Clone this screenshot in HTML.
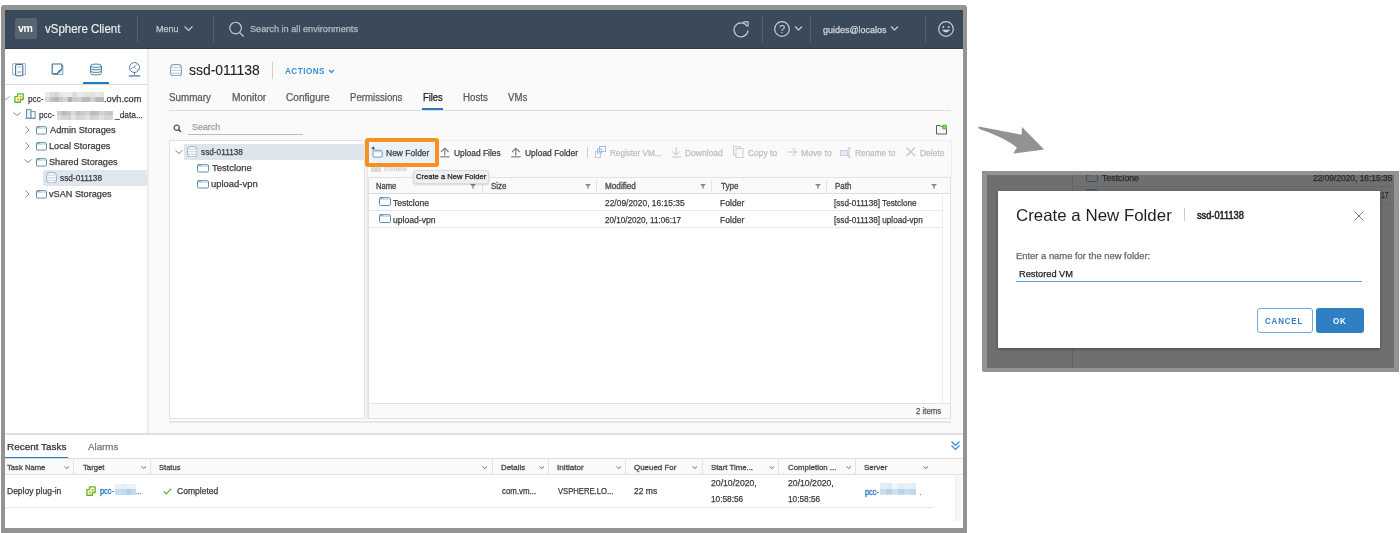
<!DOCTYPE html>
<html><head><meta charset="utf-8"><style>
html,body{margin:0;padding:0;width:1400px;height:533px;overflow:hidden;background:#fff;}
body>div,body>svg{position:absolute;}
.t{white-space:nowrap;-webkit-text-stroke:0.25px currentColor;font-family:"Liberation Sans",sans-serif;transform-origin:0 0;}
</style></head><body>
<div style="left:1px;top:5px;width:966px;height:528px;background:#939393;border-radius:3px 3px 0 0;"></div>
<div style="left:5px;top:10px;width:958px;height:518px;background:#fff;"></div>
<div style="left:5px;top:10px;width:958px;height:39px;background:#3b4a5a;"></div>
<div style="left:5px;top:48px;width:958px;height:1px;background:#2f3c49;"></div>
<div style="left:15px;top:18px;width:22px;height:21px;background:#57646f;border-radius:2px;"></div>
<div class="t" style="left:18.20px;top:23px;font-size:11px;line-height:11px;color:#fff;font-weight:bold;-webkit-text-stroke:0;transform:scaleX(0.9626);letter-spacing:-0.5px;">vm</div>
<div class="t" style="left:45.30px;top:23px;font-size:12px;line-height:12px;color:#eef0f2;transform:scaleX(0.9578);-webkit-text-stroke:0.15px #eef0f2;">vSphere Client</div>
<div style="left:137px;top:15px;width:1px;height:27px;background:#56636f;"></div>
<div style="left:154px;top:20.5px;width:41.5px;height:17px;border:1px solid #37465a;box-sizing:border-box;"></div>
<div class="t" style="left:155.90px;top:25px;font-size:9px;line-height:9px;color:#c2c9d0;transform:scaleX(1.0034);">Menu</div>
<svg style="left:183px;top:25px;" width="11" height="8" viewBox="0 0 11 8"><path d="M1.5 1.5 L5.5 5.5 L9.5 1.5" stroke="#c2c9d0" stroke-width="1.2" fill="none"/></svg>
<div style="left:213px;top:15px;width:1px;height:27px;background:#56636f;"></div>
<svg style="left:228px;top:21px;" width="18" height="17" viewBox="0 0 18 17"><circle cx="7.6" cy="7.1" r="5.8" stroke="#c9cfd5" stroke-width="1.1" fill="none"/><path d="M11.8 11.6 L15.8 15.6" stroke="#c9cfd5" stroke-width="1.3"/></svg>
<div class="t" style="left:250.00px;top:25px;font-size:9px;line-height:9px;color:#b4bcc4;transform:scaleX(1.0182);">Search in all environments</div>
<svg style="left:733px;top:20px;" width="18" height="18" viewBox="0 0 18 18"><path d="M14.2 6.5 A7 7 0 1 0 15.0 10.5" stroke="#c9cfd5" stroke-width="1.2" fill="none"/><path d="M10.2 1.8 L15.0 1.8 L15.0 6.6" stroke="#c9cfd5" stroke-width="1.2" fill="none"/></svg>
<div style="left:762px;top:15px;width:1px;height:27px;background:#56636f;"></div>
<svg style="left:773px;top:20px;" width="18" height="18" viewBox="0 0 18 18"><circle cx="9" cy="9" r="7.3" stroke="#c9cfd5" stroke-width="1.2" fill="none"/><text x="9" y="12.8" font-family="Liberation Sans" font-size="11" fill="#c9cfd5" text-anchor="middle">?</text></svg>
<svg style="left:794px;top:25px;" width="9" height="7" viewBox="0 0 9 7"><path d="M1 1.5 L4.5 5 L8 1.5" stroke="#c9cfd5" stroke-width="1.2" fill="none"/></svg>
<div style="left:810px;top:15px;width:1px;height:27px;background:#56636f;"></div>
<div class="t" style="left:822.90px;top:26px;font-size:9px;line-height:9px;color:#d3d8dd;transform:scaleX(0.9957);">guides@localos</div>
<svg style="left:890px;top:25px;" width="9" height="7" viewBox="0 0 9 7"><path d="M1 1.5 L4.5 5 L8 1.5" stroke="#c9cfd5" stroke-width="1.2" fill="none"/></svg>
<div style="left:925px;top:15px;width:1px;height:27px;background:#56636f;"></div>
<svg style="left:937px;top:20px;" width="18" height="18" viewBox="0 0 18 18"><circle cx="9" cy="9" r="7.3" stroke="#c9cfd5" stroke-width="1.2" fill="none"/><circle cx="6.3" cy="7" r="1" fill="#c9cfd5"/><circle cx="11.7" cy="7" r="1" fill="#c9cfd5"/><path d="M4.8 9.8 Q9 15 13.2 9.8 Z" fill="#c9cfd5"/></svg>
<div style="left:5px;top:49px;width:142px;height:384px;background:#fff;"></div>
<div style="left:147px;top:49px;width:2px;height:384px;background:#ececec;"></div>
<div style="left:5px;top:84px;width:142px;height:1px;background:#dcdcdc;"></div>
<div style="left:83px;top:82px;width:26px;height:2px;background:#1f7ac9;"></div>
<svg style="left:11px;top:62px;" width="16" height="15" viewBox="0 0 16 15"><rect x="1.6" y="1.6" width="12.8" height="11.2" rx="1" fill="none" stroke="#9fb8cd" stroke-width="1.1"/><rect x="4.6" y="2.5" width="7.2" height="11.3" rx="1.2" fill="#fff" stroke="#3f6f98" stroke-width="1.1"/><rect x="6" y="4.4" width="4.4" height="1.2" fill="#b5c7d6"/><rect x="6" y="8.9" width="4.4" height="2.5" fill="#c3d2de"/></svg>
<svg style="left:51px;top:63px;" width="13" height="13" viewBox="0 0 13 13"><path d="M2.5 11.5 H11.8 V2" stroke="#8aa7bf" stroke-width="1.1" fill="none"/><path d="M1.2 1 H10.8 V6.2 L6.2 10.9 H1.2 Z" fill="#fff" stroke="#3f6f98" stroke-width="1.1" stroke-linejoin="round"/><path d="M6.3 10.9 Q7 7.4 10.8 6.2" stroke="#3f6f98" stroke-width="1" fill="none"/><path d="M8.5 10.5 L11 8" stroke="#c9d6e1" stroke-width="1.2"/></svg>
<svg style="left:89.7px;top:63px;" width="12" height="13" viewBox="0 0 12 13"><ellipse cx="6.0" cy="2.7" rx="5.4" ry="1.7" fill="none" stroke="#4f7ea6" stroke-width="1.0"/><path d="M0.5999999999999996 2.7 V10.3 A5.4 1.7 0 0 0 11.4 10.3 V2.7" fill="none" stroke="#4f7ea6" stroke-width="1.0"/><path d="M0.5999999999999996 5.233333333333334 A5.4 1.7 0 0 0 11.4 5.233333333333334 M0.5999999999999996 7.7666666666666675 A5.4 1.7 0 0 0 11.4 7.7666666666666675" fill="none" stroke="#4f7ea6" stroke-width="1.0"/></svg>
<svg style="left:128px;top:61px;" width="13" height="17" viewBox="0 0 13 17"><circle cx="6.5" cy="6.5" r="5" fill="none" stroke="#5580a6" stroke-width="1"/><path d="M2.8 8 L6 6 L9.5 3" stroke="#5580a6" stroke-width="0.9" stroke-dasharray="1.2 0.8"/><path d="M6 6 Q8 8.5 10.5 9" stroke="#9fb8cd" stroke-width="0.9" fill="none"/><path d="M6.5 11.5 V14" stroke="#5580a6" stroke-width="1"/><rect x="0.8" y="14" width="11.4" height="1.8" fill="#7f9fbb"/></svg>
<svg style="left:2px;top:96px;" width="8" height="5" viewBox="0 0 8 5"><path d="M0.5 0.5 L4.0 3.5 L7.5 0.5" stroke="#999" stroke-width="1" fill="none"/></svg>
<svg style="left:14px;top:93px;" width="10.5" height="10.5" viewBox="0 0 10.5 10.5"><path d="M0.9 3.6 H3.6 V0.9 H9.2 V6.5 H6.5 V9.2 H0.9 Z" fill="#fff" stroke="#5fb82a" stroke-width="1.35" stroke-linejoin="round"/><circle cx="6.5" cy="4" r="1.25" fill="#f4b400"/><circle cx="4" cy="6.6" r="1.25" fill="#f4b400"/></svg>
<div class="t" style="left:28.10px;top:94px;font-size:9.5px;line-height:9.5px;color:#3a3a3a;transform:scaleX(0.8633);">pcc-</div>
<svg style="left:44.8px;top:92px;filter:blur(0.7px);" width="59.2" height="10" viewBox="0 0 59.2 10"><rect x="0.00" y="0" width="4.85" height="5" fill="#eaeaea"/><rect x="4.55" y="0" width="4.85" height="5" fill="#dddddd"/><rect x="9.11" y="0" width="4.85" height="5" fill="#d6d6d6"/><rect x="13.66" y="0" width="4.85" height="5" fill="#e6e6e6"/><rect x="18.22" y="0" width="4.85" height="5" fill="#ececec"/><rect x="22.77" y="0" width="4.85" height="5" fill="#ececec"/><rect x="27.32" y="0" width="4.85" height="5" fill="#dadada"/><rect x="31.88" y="0" width="4.85" height="5" fill="#ececec"/><rect x="36.43" y="0" width="4.85" height="5" fill="#e8e8e8"/><rect x="40.98" y="0" width="4.85" height="5" fill="#e2e2e2"/><rect x="45.54" y="0" width="4.85" height="5" fill="#e2e2e2"/><rect x="50.09" y="0" width="4.85" height="5" fill="#eaeaea"/><rect x="54.65" y="0" width="4.85" height="5" fill="#e5e5e5"/><rect x="0.00" y="5" width="4.85" height="5" fill="#dadada"/><rect x="4.55" y="5" width="4.85" height="5" fill="#c2c2c2"/><rect x="9.11" y="5" width="4.85" height="5" fill="#b6b6b6"/><rect x="13.66" y="5" width="4.85" height="5" fill="#c8c8c8"/><rect x="18.22" y="5" width="4.85" height="5" fill="#d6d6d6"/><rect x="22.77" y="5" width="4.85" height="5" fill="#b2b2b2"/><rect x="27.32" y="5" width="4.85" height="5" fill="#cbcbcb"/><rect x="31.88" y="5" width="4.85" height="5" fill="#cecece"/><rect x="36.43" y="5" width="4.85" height="5" fill="#bbbbbb"/><rect x="40.98" y="5" width="4.85" height="5" fill="#bbbbbb"/><rect x="45.54" y="5" width="4.85" height="5" fill="#d2d2d2"/><rect x="50.09" y="5" width="4.85" height="5" fill="#b8b8b8"/><rect x="54.65" y="5" width="4.85" height="5" fill="#bababa"/></svg>
<div class="t" style="left:104.00px;top:94px;font-size:9.5px;line-height:9.5px;color:#3a3a3a;transform:scaleX(0.9677);">.ovh.com</div>
<svg style="left:13px;top:112px;" width="8" height="5" viewBox="0 0 8 5"><path d="M0.5 0.5 L4.0 3.5 L7.5 0.5" stroke="#888" stroke-width="1" fill="none"/></svg>
<svg style="left:25px;top:109px;" width="11" height="10" viewBox="0 0 11 10"><rect x="1.5" y="0.6" width="4.6" height="8.6" fill="#e3ebf2" stroke="#6a93b5" stroke-width="1"/><rect x="6.1" y="2.6" width="4" height="6.6" fill="#fff" stroke="#6a93b5" stroke-width="1"/><path d="M0.3 9.4 H10.6" stroke="#6a93b5" stroke-width="1"/><path d="M3.8 2 V8" stroke="#fff" stroke-width="0.8"/></svg>
<div class="t" style="left:38.80px;top:110px;font-size:9.5px;line-height:9.5px;color:#3a3a3a;transform:scaleX(0.8633);">pcc-</div>
<svg style="left:56.8px;top:110.7px;filter:blur(0.7px);" width="56.5" height="9.2" viewBox="0 0 56.5 9.2"><rect x="0.00" y="0" width="5.01" height="4.8" fill="#cecece"/><rect x="4.71" y="0" width="5.01" height="4.8" fill="#bababa"/><rect x="9.42" y="0" width="5.01" height="4.8" fill="#c4c4c4"/><rect x="14.12" y="0" width="5.01" height="4.8" fill="#dadada"/><rect x="18.83" y="0" width="5.01" height="4.8" fill="#c1c1c1"/><rect x="23.54" y="0" width="5.01" height="4.8" fill="#cacaca"/><rect x="28.25" y="0" width="5.01" height="4.8" fill="#d2d2d2"/><rect x="32.96" y="0" width="5.01" height="4.8" fill="#bbbbbb"/><rect x="37.67" y="0" width="5.01" height="4.8" fill="#bfbfbf"/><rect x="42.38" y="0" width="5.01" height="4.8" fill="#d4d4d4"/><rect x="47.08" y="0" width="5.01" height="4.8" fill="#cacaca"/><rect x="51.79" y="0" width="5.01" height="4.8" fill="#c4c4c4"/><rect x="0.00" y="4.8" width="5.01" height="4.400000000000003" fill="#dedede"/><rect x="4.71" y="4.8" width="5.01" height="4.400000000000003" fill="#d4d4d4"/><rect x="9.42" y="4.8" width="5.01" height="4.400000000000003" fill="#d2d2d2"/><rect x="14.12" y="4.8" width="5.01" height="4.400000000000003" fill="#e2e2e2"/><rect x="18.83" y="4.8" width="5.01" height="4.400000000000003" fill="#d4d4d4"/><rect x="23.54" y="4.8" width="5.01" height="4.400000000000003" fill="#d8d8d8"/><rect x="28.25" y="4.8" width="5.01" height="4.400000000000003" fill="#e2e2e2"/><rect x="32.96" y="4.8" width="5.01" height="4.400000000000003" fill="#d2d2d2"/><rect x="37.67" y="4.8" width="5.01" height="4.400000000000003" fill="#d6d6d6"/><rect x="42.38" y="4.8" width="5.01" height="4.400000000000003" fill="#e0e0e0"/><rect x="47.08" y="4.8" width="5.01" height="4.400000000000003" fill="#d6d6d6"/><rect x="51.79" y="4.8" width="5.01" height="4.400000000000003" fill="#d8d8d8"/></svg>
<div class="t" style="left:115.17px;top:110px;font-size:9.5px;line-height:9.5px;color:#3a3a3a;transform:scaleX(0.8792);">_data...</div>
<svg style="left:25px;top:126px;" width="5.5" height="8" viewBox="0 0 5.5 8"><path d="M0.5 0.5 L4.0 4.0 L0.5 7.5" stroke="#8a8a8a" stroke-width="1" fill="none"/></svg>
<svg style="left:36px;top:126px;" width="11" height="8.6" viewBox="0 0 11 8.6"><rect x="0.5" y="0.7" width="10" height="7.3999999999999995" rx="1.2" fill="#fff" stroke="#5f8db0" stroke-width="1"/><path d="M1 2.2 H10" stroke="#b5c9da" stroke-width="0.9"/><path d="M0.8 0.9 H4.3" stroke="#5f8db0" stroke-width="1.2"/></svg>
<div class="t" style="left:49.80px;top:125px;font-size:9.5px;line-height:9.5px;color:#3a3a3a;transform:scaleX(0.9705);">Admin Storages</div>
<svg style="left:25px;top:142px;" width="5.5" height="8" viewBox="0 0 5.5 8"><path d="M0.5 0.5 L4.0 4.0 L0.5 7.5" stroke="#8a8a8a" stroke-width="1" fill="none"/></svg>
<svg style="left:36px;top:142px;" width="11" height="8.6" viewBox="0 0 11 8.6"><rect x="0.5" y="0.7" width="10" height="7.3999999999999995" rx="1.2" fill="#fff" stroke="#5f8db0" stroke-width="1"/><path d="M1 2.2 H10" stroke="#b5c9da" stroke-width="0.9"/><path d="M0.8 0.9 H4.3" stroke="#5f8db0" stroke-width="1.2"/></svg>
<div class="t" style="left:49.40px;top:141px;font-size:9.5px;line-height:9.5px;color:#3a3a3a;transform:scaleX(0.9690);">Local Storages</div>
<svg style="left:24px;top:159px;" width="8" height="5" viewBox="0 0 8 5"><path d="M0.5 0.5 L4.0 3.5 L7.5 0.5" stroke="#888" stroke-width="1" fill="none"/></svg>
<svg style="left:36px;top:158px;" width="11" height="8.6" viewBox="0 0 11 8.6"><rect x="0.5" y="0.7" width="10" height="7.3999999999999995" rx="1.2" fill="#fff" stroke="#5f8db0" stroke-width="1"/><path d="M1 2.2 H10" stroke="#b5c9da" stroke-width="0.9"/><path d="M0.8 0.9 H4.3" stroke="#5f8db0" stroke-width="1.2"/></svg>
<div class="t" style="left:49.40px;top:157px;font-size:9.5px;line-height:9.5px;color:#3a3a3a;transform:scaleX(0.9622);">Shared Storages</div>
<div style="left:43px;top:170px;width:104px;height:16px;background:#dfe6ed;border-radius:2px 0 0 2px;"></div>
<svg style="left:45.5px;top:171.8px;" width="11" height="11.5" viewBox="0 0 11 11.5"><rect x="0.6" y="0.6" width="9.8" height="10.3" rx="2.8" fill="#fff" stroke="#8fb0c8" stroke-width="1.0"/><path d="M1.6 3.18 H9.4" stroke="#b5cadb" stroke-width="0.9"/><path d="M1.6 5.75 H9.4" stroke="#b5cadb" stroke-width="0.9"/><path d="M1.6 8.33 H9.4" stroke="#b5cadb" stroke-width="0.9"/></svg>
<div class="t" style="left:60.20px;top:173px;font-size:9.5px;line-height:9.5px;color:#3a3a3a;transform:scaleX(0.8707);">ssd-011138</div>
<svg style="left:25px;top:190px;" width="5.5" height="8" viewBox="0 0 5.5 8"><path d="M0.5 0.5 L4.0 4.0 L0.5 7.5" stroke="#8a8a8a" stroke-width="1" fill="none"/></svg>
<svg style="left:36px;top:190px;" width="11" height="8.6" viewBox="0 0 11 8.6"><rect x="0.5" y="0.7" width="10" height="7.3999999999999995" rx="1.2" fill="#fff" stroke="#5f8db0" stroke-width="1"/><path d="M1 2.2 H10" stroke="#b5c9da" stroke-width="0.9"/><path d="M0.8 0.9 H4.3" stroke="#5f8db0" stroke-width="1.2"/></svg>
<div class="t" style="left:49.40px;top:189px;font-size:9.5px;line-height:9.5px;color:#3a3a3a;transform:scaleX(0.9637);">vSAN Storages</div>
<div style="left:149px;top:49px;width:814px;height:384px;background:#fafafa;"></div>
<div style="left:149px;top:49px;width:814px;height:1px;background:#ffffff;"></div>
<div style="left:962px;top:49px;width:1px;height:384px;background:#ffffff;"></div>
<svg style="left:169.5px;top:63.5px;" width="12" height="12.5" viewBox="0 0 12 12.5"><rect x="0.6" y="0.6" width="10.8" height="11.3" rx="3" fill="#fff" stroke="#86a6c0" stroke-width="1.2"/><path d="M1.6 3.43 H10.4" stroke="#aec4d6" stroke-width="0.9"/><path d="M1.6 6.25 H10.4" stroke="#aec4d6" stroke-width="0.9"/><path d="M1.6 9.08 H10.4" stroke="#aec4d6" stroke-width="0.9"/></svg>
<div class="t" style="left:189.20px;top:63px;font-size:14px;line-height:14px;color:#222;transform:scaleX(0.9946);-webkit-text-stroke:0.1px #222;">ssd-011138</div>
<div style="left:272px;top:62px;width:1px;height:17px;background:#d0d0d0;"></div>
<div class="t" style="left:285.20px;top:67px;font-size:8.5px;line-height:8.5px;color:#3b8fd0;font-weight:bold;-webkit-text-stroke:0;transform:scaleX(0.9576);letter-spacing:0.5px;">ACTIONS</div>
<svg style="left:327.5px;top:68.5px;" width="7" height="5" viewBox="0 0 7 5"><path d="M1 1 L3.5 3.5 L6 1" stroke="#3b8fd0" stroke-width="1.3" fill="none"/></svg>
<div class="t" style="left:169.00px;top:93px;font-size:10px;line-height:10px;color:#5a5a5a;transform:scaleX(0.9819);">Summary</div>
<div class="t" style="left:231.60px;top:93px;font-size:10px;line-height:10px;color:#5a5a5a;transform:scaleX(1.0285);">Monitor</div>
<div class="t" style="left:285.60px;top:93px;font-size:10px;line-height:10px;color:#5a5a5a;transform:scaleX(1.0081);">Configure</div>
<div class="t" style="left:349.70px;top:93px;font-size:10px;line-height:10px;color:#5a5a5a;transform:scaleX(0.9624);">Permissions</div>
<div class="t" style="left:422.50px;top:93px;font-size:10px;line-height:10px;color:#1d1d1d;transform:scaleX(0.9325);">Files</div>
<div class="t" style="left:462.60px;top:93px;font-size:10px;line-height:10px;color:#5a5a5a;transform:scaleX(0.9746);">Hosts</div>
<div class="t" style="left:507.90px;top:93px;font-size:10px;line-height:10px;color:#5a5a5a;transform:scaleX(0.9600);">VMs</div>
<div style="left:169px;top:110px;width:782px;height:1px;background:#dedede;"></div>
<div style="left:422px;top:108px;width:21px;height:2px;background:#1f7ac9;"></div>
<svg style="left:173px;top:124px;" width="9" height="9" viewBox="0 0 9 9"><circle cx="3.7" cy="3.7" r="2.6" fill="none" stroke="#555" stroke-width="1.3"/><path d="M5.6 5.6 L8 8" stroke="#555" stroke-width="1.5"/></svg>
<div class="t" style="left:191.80px;top:122px;font-size:9.5px;line-height:9.5px;color:#9c9c9c;transform:scaleX(0.9371);">Search</div>
<div style="left:188px;top:134px;width:115px;height:1px;background:#bdbdbd;"></div>
<svg style="left:935px;top:124px;" width="13" height="11" viewBox="0 0 13 11"><path d="M1.5 1.5 H5 L6.2 2.6 H11.5 V10 H1.5 Z" fill="none" stroke="#5c5c5c" stroke-width="1" stroke-linejoin="round"/><rect x="7.2" y="0.8" width="4.8" height="4.6" rx="0.8" fill="#5fc23f"/><path d="M8.5 4.2 L11 1.8" stroke="#b9f0a8" stroke-width="0.8"/></svg>
<div style="left:169px;top:140px;width:196px;height:279px;background:#fff;border:1px solid #e2e2e2;box-sizing:border-box;"></div>
<div style="left:184px;top:144px;width:181px;height:16px;background:#dfe5ec;"></div>
<svg style="left:175px;top:150px;" width="8" height="5" viewBox="0 0 8 5"><path d="M0.5 0.5 L4.0 3.5 L7.5 0.5" stroke="#888" stroke-width="1" fill="none"/></svg>
<svg style="left:186.5px;top:145.5px;" width="10.5" height="11.5" viewBox="0 0 10.5 11.5"><rect x="0.6" y="0.6" width="9.3" height="10.3" rx="2.8" fill="#fff" stroke="#8fb0c8" stroke-width="1.0"/><path d="M1.6 3.18 H8.9" stroke="#b5cadb" stroke-width="0.9"/><path d="M1.6 5.75 H8.9" stroke="#b5cadb" stroke-width="0.9"/><path d="M1.6 8.33 H8.9" stroke="#b5cadb" stroke-width="0.9"/></svg>
<div class="t" style="left:200.90px;top:147px;font-size:9.5px;line-height:9.5px;color:#3a3a3a;transform:scaleX(0.8686);">ssd-011138</div>
<svg style="left:197px;top:164px;" width="12" height="8.5" viewBox="0 0 12 8.5"><rect x="0.5" y="0.7" width="11" height="7.3" rx="1.2" fill="#fff" stroke="#5f8db0" stroke-width="1"/><path d="M1 2.2 H11" stroke="#b5c9da" stroke-width="0.9"/><path d="M0.8 0.9 H4.3" stroke="#5f8db0" stroke-width="1.2"/></svg>
<div class="t" style="left:211.50px;top:163px;font-size:9.5px;line-height:9.5px;color:#3a3a3a;transform:scaleX(0.9891);">Testclone</div>
<svg style="left:197px;top:180px;" width="12" height="8.5" viewBox="0 0 12 8.5"><rect x="0.5" y="0.7" width="11" height="7.3" rx="1.2" fill="#fff" stroke="#5f8db0" stroke-width="1"/><path d="M1 2.2 H11" stroke="#b5c9da" stroke-width="0.9"/><path d="M0.8 0.9 H4.3" stroke="#5f8db0" stroke-width="1.2"/></svg>
<div class="t" style="left:211.30px;top:179px;font-size:9.5px;line-height:9.5px;color:#3a3a3a;transform:scaleX(0.9936);">upload-vpn</div>
<div style="left:169px;top:421px;width:782px;height:2px;background:#e6e6e6;"></div>
<div style="left:366px;top:140px;width:2px;height:279px;background:#ebebeb;"></div>
<div style="left:368px;top:140px;width:584px;height:1px;background:#f0f0f0;"></div>
<div style="left:951px;top:140px;width:1px;height:37px;background:#eeeeee;"></div>
<div class="t" style="left:453.60px;top:149px;font-size:9px;line-height:9px;color:#3a3a3a;transform:scaleX(0.9337);">Upload Files</div>
<svg style="left:440px;top:147px;" width="10" height="11" viewBox="0 0 10 11"><path d="M4.8 1.2 V8.5 M1 5 L4.8 1.2 L8.6 5" stroke="#777" stroke-width="1.1" fill="none"/><path d="M0.2 9.8 H9.6" stroke="#888" stroke-width="1.3"/></svg>
<div class="t" style="left:524.90px;top:149px;font-size:9px;line-height:9px;color:#3a3a3a;transform:scaleX(0.9391);">Upload Folder</div>
<svg style="left:511px;top:147px;" width="10" height="11" viewBox="0 0 10 11"><path d="M4.8 1.2 V8.5 M1 5 L4.8 1.2 L8.6 5" stroke="#777" stroke-width="1.1" fill="none"/><path d="M0.2 9.8 H9.6" stroke="#888" stroke-width="1.3"/></svg>
<div style="left:587px;top:147px;width:1px;height:11px;background:#cfcfcf;"></div>
<svg style="left:595px;top:146px;" width="12" height="12" viewBox="0 0 12 12"><rect x="0.5" y="5.5" width="5" height="6" fill="none" stroke="#c5ccd6" stroke-width="1"/><rect x="4.5" y="0.5" width="6" height="5" fill="none" stroke="#9fc0e6" stroke-width="1"/><rect x="2.5" y="3" width="4" height="4" fill="none" stroke="#9fc0e6" stroke-width="1"/></svg>
<div class="t" style="left:609.70px;top:149px;font-size:9px;line-height:9px;color:#bdbdbd;transform:scaleX(0.9033);">Register VM...</div>
<svg style="left:671px;top:147px;" width="11" height="11" viewBox="0 0 11 11"><path d="M5.2 0.5 V8 M1.5 4.3 L5.2 8 L8.9 4.3 M0.5 10 H10" stroke="#c4c4c4" stroke-width="1" fill="none"/></svg>
<div class="t" style="left:685.20px;top:149px;font-size:9px;line-height:9px;color:#bdbdbd;transform:scaleX(0.9419);">Download</div>
<svg style="left:733px;top:146px;" width="11" height="12" viewBox="0 0 11 12"><rect x="0.5" y="0.5" width="6.5" height="8.5" fill="none" stroke="#cccccc" stroke-width="1"/><rect x="3" y="2.5" width="7" height="9" fill="#fafafa" stroke="#cccccc" stroke-width="1"/></svg>
<div class="t" style="left:747.80px;top:149px;font-size:9px;line-height:9px;color:#bdbdbd;transform:scaleX(0.9379);">Copy to</div>
<svg style="left:787px;top:147px;" width="11" height="10" viewBox="0 0 11 10"><path d="M0 5 H9.5 M5.5 1 L9.5 5 L5.5 9" stroke="#c4c4c4" stroke-width="1" fill="none"/></svg>
<div class="t" style="left:801.10px;top:149px;font-size:9px;line-height:9px;color:#bdbdbd;transform:scaleX(0.9589);">Move to</div>
<svg style="left:840px;top:147px;" width="12" height="11" viewBox="0 0 12 11"><rect x="0.5" y="3.5" width="7" height="5" fill="#e3e9f3" stroke="#c8d2e2" stroke-width="1"/><path d="M9 1 V10 M7.5 1 H10.5 M7.5 10 H10.5" stroke="#bbb" stroke-width="0.9"/></svg>
<div class="t" style="left:854.60px;top:149px;font-size:9px;line-height:9px;color:#bdbdbd;transform:scaleX(0.9152);">Rename to</div>
<svg style="left:906px;top:147px;" width="10" height="10" viewBox="0 0 10 10"><path d="M0.5 0.5 L9 9 M9 0.5 L0.5 9" stroke="#c4c4c4" stroke-width="1.1"/></svg>
<div class="t" style="left:919.70px;top:149px;font-size:9px;line-height:9px;color:#bdbdbd;transform:scaleX(0.9419);">Delete</div>
<div style="left:371px;top:167px;width:10px;height:4.5px;background:#dcdcdc;"></div>
<div class="t" style="left:383.70px;top:164px;font-size:9px;line-height:9px;color:#cfcfcf;transform:scaleX(0.9378);">Inflate</div>
<div style="left:368px;top:177px;width:583px;height:242px;background:#fff;border:1px solid #e2e2e2;box-sizing:border-box;"></div>
<div style="left:369px;top:404px;width:581px;height:14px;background:#fafafa;"></div>
<div style="left:369px;top:178px;width:581px;height:15px;background:#fafafa;"></div>
<div style="left:368px;top:193px;width:583px;height:1px;background:#dcdcdc;"></div>
<div style="left:482px;top:180px;width:1px;height:13px;background:#e3e3e3;"></div>
<div style="left:596px;top:180px;width:1px;height:13px;background:#e3e3e3;"></div>
<div style="left:711px;top:180px;width:1px;height:13px;background:#e3e3e3;"></div>
<div style="left:826px;top:180px;width:1px;height:13px;background:#e3e3e3;"></div>
<div class="t" style="left:376.40px;top:183px;font-size:8.2px;line-height:8.2px;color:#444;transform:scaleX(0.9326);-webkit-text-stroke:0.3px #4a4a4a;">Name</div>
<svg style="left:470px;top:183.5px;" width="6" height="5" viewBox="0 0 6 5"><path d="M0 0 H6 L3.6 2.6 V4.8 H2.4 V2.6 Z" fill="#888"/></svg>
<div class="t" style="left:490.50px;top:183px;font-size:8.2px;line-height:8.2px;color:#444;transform:scaleX(0.9718);-webkit-text-stroke:0.3px #4a4a4a;">Size</div>
<svg style="left:584.5px;top:183.5px;" width="6" height="5" viewBox="0 0 6 5"><path d="M0 0 H6 L3.6 2.6 V4.8 H2.4 V2.6 Z" fill="#888"/></svg>
<div class="t" style="left:605.40px;top:183px;font-size:8.2px;line-height:8.2px;color:#444;transform:scaleX(0.9969);-webkit-text-stroke:0.3px #4a4a4a;">Modified</div>
<svg style="left:699.5px;top:183.5px;" width="6" height="5" viewBox="0 0 6 5"><path d="M0 0 H6 L3.6 2.6 V4.8 H2.4 V2.6 Z" fill="#888"/></svg>
<div class="t" style="left:720.80px;top:183px;font-size:8.2px;line-height:8.2px;color:#444;transform:scaleX(0.9846);-webkit-text-stroke:0.3px #4a4a4a;">Type</div>
<svg style="left:815px;top:183.5px;" width="6" height="5" viewBox="0 0 6 5"><path d="M0 0 H6 L3.6 2.6 V4.8 H2.4 V2.6 Z" fill="#888"/></svg>
<div class="t" style="left:835.20px;top:183px;font-size:8.2px;line-height:8.2px;color:#444;transform:scaleX(0.9780);-webkit-text-stroke:0.3px #4a4a4a;">Path</div>
<svg style="left:930.5px;top:183.5px;" width="6" height="5" viewBox="0 0 6 5"><path d="M0 0 H6 L3.6 2.6 V4.8 H2.4 V2.6 Z" fill="#888"/></svg>
<div style="left:369px;top:210px;width:573px;height:1px;background:#e8e8e8;"></div>
<div style="left:369px;top:227px;width:573px;height:1px;background:#e8e8e8;"></div>
<div style="left:942px;top:194px;width:1px;height:209px;background:#ececec;"></div>
<svg style="left:379px;top:197px;" width="12" height="9" viewBox="0 0 12 9"><rect x="0.5" y="0.7" width="11" height="7.8" rx="1.2" fill="#fff" stroke="#5f8db0" stroke-width="1"/><path d="M1 2.2 H11" stroke="#b5c9da" stroke-width="0.9"/><path d="M0.8 0.9 H4.3" stroke="#5f8db0" stroke-width="1.2"/></svg>
<div class="t" style="left:393.40px;top:199px;font-size:8.7px;line-height:8.7px;color:#3a3a3a;transform:scaleX(0.9794);">Testclone</div>
<div class="t" style="left:605.40px;top:199px;font-size:8.7px;line-height:8.7px;color:#3a3a3a;transform:scaleX(0.9692);">22/09/2020, 16:15:35</div>
<div class="t" style="left:720.00px;top:199px;font-size:8.7px;line-height:8.7px;color:#3a3a3a;transform:scaleX(0.9852);">Folder</div>
<div class="t" style="left:834.10px;top:199px;font-size:8.7px;line-height:8.7px;color:#3a3a3a;transform:scaleX(0.9395);">[ssd-011138] Testclone</div>
<svg style="left:379px;top:214px;" width="12" height="9" viewBox="0 0 12 9"><rect x="0.5" y="0.7" width="11" height="7.8" rx="1.2" fill="#fff" stroke="#5f8db0" stroke-width="1"/><path d="M1 2.2 H11" stroke="#b5c9da" stroke-width="0.9"/><path d="M0.8 0.9 H4.3" stroke="#5f8db0" stroke-width="1.2"/></svg>
<div class="t" style="left:393.40px;top:216px;font-size:8.7px;line-height:8.7px;color:#3a3a3a;transform:scaleX(0.9897);">upload-vpn</div>
<div class="t" style="left:605.40px;top:216px;font-size:8.7px;line-height:8.7px;color:#3a3a3a;transform:scaleX(0.9325);">20/10/2020, 11:06:17</div>
<div class="t" style="left:720.00px;top:216px;font-size:8.7px;line-height:8.7px;color:#3a3a3a;transform:scaleX(0.9852);">Folder</div>
<div class="t" style="left:834.10px;top:216px;font-size:8.7px;line-height:8.7px;color:#3a3a3a;transform:scaleX(0.9399);">[ssd-011138] upload-vpn</div>
<div style="left:369px;top:403px;width:581px;height:1px;background:#e2e2e2;"></div>
<div class="t" style="left:915.90px;top:407px;font-size:8.5px;line-height:8.5px;color:#555;transform:scaleX(0.9200);">2 items</div>
<div style="left:365px;top:138px;width:74px;height:28.5px;border-style:solid;border-color:#f7901e;border-width:4.5px 4.7px;border-radius:3px;box-sizing:border-box;background:#e8f2fb;box-shadow:inset 0 0 0 1px #f2f8fd;"></div>
<svg style="left:370px;top:145px;" width="14" height="13" viewBox="0 0 14 13"><rect x="3" y="5.3" width="9.2" height="6.8" rx="1.2" fill="#fff" stroke="#7299bb" stroke-width="1"/><path d="M3.6 6.8 H11.6" stroke="#aac2d6" stroke-width="0.9"/><path d="M3.2 1 L3.8 2.6 L5.4 3.2 L3.8 3.8 L3.2 5.4 L2.6 3.8 L1 3.2 L2.6 2.6 Z" fill="#17497a"/></svg>
<div class="t" style="left:385.60px;top:149px;font-size:9px;line-height:9px;color:#3a3a3a;transform:scaleX(0.9432);">New Folder</div>
<div style="left:413px;top:170px;width:76px;height:13.5px;background:#efefef;border:1px solid #dadada;border-radius:3px;box-sizing:border-box;box-shadow:0 1px 2px rgba(0,0,0,0.15);"></div>
<div class="t" style="left:416.20px;top:173px;font-size:8px;line-height:8px;color:#222;transform:scaleX(0.9510);">Create a New Folder</div>
<div style="left:5px;top:433px;width:958px;height:2px;background:#dfdfdf;"></div>
<div style="left:5px;top:435px;width:958px;height:93px;background:#fff;"></div>
<div class="t" style="left:6.60px;top:442px;font-size:9.5px;line-height:9.5px;color:#333;transform:scaleX(1.0447);">Recent Tasks</div>
<div class="t" style="left:87.80px;top:442px;font-size:9.5px;line-height:9.5px;color:#777;transform:scaleX(1.0281);">Alarms</div>
<div style="left:5px;top:457px;width:63px;height:2px;background:#1f7ac9;"></div>
<div style="left:5px;top:458px;width:958px;height:1px;background:#dedede;"></div>
<div style="left:5px;top:459px;width:958px;height:16px;background:#fafafa;"></div>
<div style="left:5px;top:474px;width:958px;height:1px;background:#e2e2e2;"></div>
<svg style="left:950px;top:440px;" width="11" height="11" viewBox="0 0 11 11"><path d="M1.5 1.5 L5.5 5.5 L9.5 1.5 M1.5 5.5 L5.5 9.5 L9.5 5.5" stroke="#2f8bd6" stroke-width="1.2" fill="none"/></svg>
<div class="t" style="left:6.60px;top:464px;font-size:8px;line-height:8px;color:#444;transform:scaleX(0.9595);-webkit-text-stroke:0.3px #4a4a4a;">Task Name</div>
<svg style="left:64px;top:465.5px;" width="5.5" height="4" viewBox="0 0 5.5 4"><path d="M0.5 0.5 L2.75 2.5 L5.0 0.5" stroke="#666" stroke-width="1" fill="none"/></svg>
<div style="left:73px;top:459px;width:1px;height:15px;background:#e3e3e3;"></div>
<div class="t" style="left:82.60px;top:464px;font-size:8px;line-height:8px;color:#444;transform:scaleX(0.9667);-webkit-text-stroke:0.3px #4a4a4a;">Target</div>
<svg style="left:140.5px;top:465.5px;" width="5.5" height="4" viewBox="0 0 5.5 4"><path d="M0.5 0.5 L2.75 2.5 L5.0 0.5" stroke="#666" stroke-width="1" fill="none"/></svg>
<div style="left:150px;top:459px;width:1px;height:15px;background:#e3e3e3;"></div>
<div class="t" style="left:159.10px;top:464px;font-size:8px;line-height:8px;color:#444;transform:scaleX(0.9436);-webkit-text-stroke:0.3px #4a4a4a;">Status</div>
<svg style="left:482px;top:465.5px;" width="5.5" height="4" viewBox="0 0 5.5 4"><path d="M0.5 0.5 L2.75 2.5 L5.0 0.5" stroke="#666" stroke-width="1" fill="none"/></svg>
<div style="left:492px;top:459px;width:1px;height:15px;background:#e3e3e3;"></div>
<div class="t" style="left:501.30px;top:464px;font-size:8px;line-height:8px;color:#444;transform:scaleX(0.9853);-webkit-text-stroke:0.3px #4a4a4a;">Details</div>
<svg style="left:539px;top:465.5px;" width="5.5" height="4" viewBox="0 0 5.5 4"><path d="M0.5 0.5 L2.75 2.5 L5.0 0.5" stroke="#666" stroke-width="1" fill="none"/></svg>
<div style="left:548px;top:459px;width:1px;height:15px;background:#e3e3e3;"></div>
<div class="t" style="left:557.10px;top:464px;font-size:8px;line-height:8px;color:#444;transform:scaleX(1.0213);-webkit-text-stroke:0.3px #4a4a4a;">Initiator</div>
<svg style="left:615.5px;top:465.5px;" width="5.5" height="4" viewBox="0 0 5.5 4"><path d="M0.5 0.5 L2.75 2.5 L5.0 0.5" stroke="#666" stroke-width="1" fill="none"/></svg>
<div style="left:625px;top:459px;width:1px;height:15px;background:#e3e3e3;"></div>
<div class="t" style="left:633.90px;top:464px;font-size:8px;line-height:8px;color:#444;transform:scaleX(0.9906);-webkit-text-stroke:0.3px #4a4a4a;">Queued For</div>
<svg style="left:692px;top:465.5px;" width="5.5" height="4" viewBox="0 0 5.5 4"><path d="M0.5 0.5 L2.75 2.5 L5.0 0.5" stroke="#666" stroke-width="1" fill="none"/></svg>
<div style="left:702px;top:459px;width:1px;height:15px;background:#e3e3e3;"></div>
<div class="t" style="left:711.00px;top:464px;font-size:8px;line-height:8px;color:#444;transform:scaleX(0.9740);-webkit-text-stroke:0.3px #4a4a4a;">Start Time...</div>
<svg style="left:768.5px;top:465.5px;" width="5.5" height="4" viewBox="0 0 5.5 4"><path d="M0.5 0.5 L2.75 2.5 L5.0 0.5" stroke="#666" stroke-width="1" fill="none"/></svg>
<div style="left:778px;top:459px;width:1px;height:15px;background:#e3e3e3;"></div>
<div class="t" style="left:787.50px;top:464px;font-size:8px;line-height:8px;color:#444;transform:scaleX(0.9806);-webkit-text-stroke:0.3px #4a4a4a;">Completion ...</div>
<svg style="left:845.5px;top:465.5px;" width="5.5" height="4" viewBox="0 0 5.5 4"><path d="M0.5 0.5 L2.75 2.5 L5.0 0.5" stroke="#666" stroke-width="1" fill="none"/></svg>
<div style="left:855px;top:459px;width:1px;height:15px;background:#e3e3e3;"></div>
<div class="t" style="left:863.70px;top:464px;font-size:8px;line-height:8px;color:#444;transform:scaleX(0.9890);-webkit-text-stroke:0.3px #4a4a4a;">Server</div>
<svg style="left:922.5px;top:465.5px;" width="5.5" height="4" viewBox="0 0 5.5 4"><path d="M0.5 0.5 L2.75 2.5 L5.0 0.5" stroke="#666" stroke-width="1" fill="none"/></svg>
<div class="t" style="left:6.60px;top:487px;font-size:8.7px;line-height:8.7px;color:#3a3a3a;transform:scaleX(0.9782);">Deploy plug-in</div>
<svg style="left:86px;top:486px;" width="10.5" height="10.5" viewBox="0 0 10.5 10.5"><path d="M0.9 3.6 H3.6 V0.9 H9.2 V6.5 H6.5 V9.2 H0.9 Z" fill="#fff" stroke="#5fb82a" stroke-width="1.35" stroke-linejoin="round"/><circle cx="6.5" cy="4" r="1.25" fill="#f4b400"/><circle cx="4" cy="6.6" r="1.25" fill="#f4b400"/></svg>
<div class="t" style="left:100.40px;top:487px;font-size:8.7px;line-height:8.7px;color:#2f80c4;transform:scaleX(0.8514);-webkit-text-stroke:0.4px #2f80c4;">pcc-</div>
<svg style="left:114.8px;top:483.8px;filter:blur(0.7px);" width="21.4" height="11.0" viewBox="0 0 21.4 11.0"><rect x="0.00" y="0" width="5.65" height="5" fill="#e9f1f8"/><rect x="5.35" y="0" width="5.65" height="5" fill="#e4eef7"/><rect x="10.70" y="0" width="5.65" height="5" fill="#e8f0f8"/><rect x="16.05" y="0" width="5.65" height="5" fill="#ecf3f9"/><rect x="0.00" y="5" width="5.65" height="6.0" fill="#c9ddef"/><rect x="5.35" y="5" width="5.65" height="6.0" fill="#c2d9ee"/><rect x="10.70" y="5" width="5.65" height="6.0" fill="#b4d1ea"/><rect x="16.05" y="5" width="5.65" height="6.0" fill="#c2d9ee"/></svg>
<div class="t" style="left:136.30px;top:487px;font-size:8.7px;line-height:8.7px;color:#777;transform:scaleX(0.7594);">...</div>
<svg style="left:163px;top:488px;" width="9" height="7" viewBox="0 0 9 7"><path d="M0.7 3.3 L3.2 5.8 L8.3 0.7" stroke="#5cad2e" stroke-width="1.2" fill="none"/></svg>
<div class="t" style="left:176.70px;top:487px;font-size:8.7px;line-height:8.7px;color:#3a3a3a;transform:scaleX(0.9818);">Completed</div>
<div class="t" style="left:501.80px;top:487px;font-size:8.7px;line-height:8.7px;color:#3a3a3a;transform:scaleX(0.9073);">com.vm...</div>
<div class="t" style="left:557.50px;top:487px;font-size:8.7px;line-height:8.7px;color:#3a3a3a;transform:scaleX(0.8814);">VSPHERE.LO...</div>
<div class="t" style="left:634.30px;top:487px;font-size:8.7px;line-height:8.7px;color:#3a3a3a;transform:scaleX(0.9795);">22 ms</div>
<div class="t" style="left:711.00px;top:479px;font-size:8.7px;line-height:8.7px;color:#3a3a3a;transform:scaleX(0.9966);">20/10/2020,</div>
<div class="t" style="left:711.00px;top:495px;font-size:8.7px;line-height:8.7px;color:#3a3a3a;transform:scaleX(0.9508);">10:58:56</div>
<div class="t" style="left:787.50px;top:479px;font-size:8.7px;line-height:8.7px;color:#3a3a3a;transform:scaleX(0.9966);">20/10/2020,</div>
<div class="t" style="left:787.50px;top:495px;font-size:8.7px;line-height:8.7px;color:#3a3a3a;transform:scaleX(0.9508);">10:58:56</div>
<div class="t" style="left:864.70px;top:488px;font-size:8.7px;line-height:8.7px;color:#2f80c4;transform:scaleX(0.8514);-webkit-text-stroke:0.4px #2f80c4;">pcc-</div>
<svg style="left:880px;top:483px;filter:blur(0.7px);" width="36" height="11.75" viewBox="0 0 36 11.75"><rect x="0.00" y="0" width="6.30" height="6" fill="#e2edf7"/><rect x="6.00" y="0" width="6.30" height="6" fill="#dfeaf6"/><rect x="12.00" y="0" width="6.30" height="6" fill="#f0f5fa"/><rect x="18.00" y="0" width="6.30" height="6" fill="#e4eef7"/><rect x="24.00" y="0" width="6.30" height="6" fill="#e9f1f9"/><rect x="30.00" y="0" width="6.30" height="6" fill="#e6eff8"/><rect x="0.00" y="6" width="6.30" height="5.75" fill="#c9ddef"/><rect x="6.00" y="6" width="6.30" height="5.75" fill="#b6d3eb"/><rect x="12.00" y="6" width="6.30" height="5.75" fill="#cfe1f0"/><rect x="18.00" y="6" width="6.30" height="5.75" fill="#b8d4eb"/><rect x="24.00" y="6" width="6.30" height="5.75" fill="#c8ddef"/><rect x="30.00" y="6" width="6.30" height="5.75" fill="#bcd6ec"/></svg>
<div class="t" style="left:919.50px;top:488px;font-size:8.7px;line-height:8.7px;color:#777;transform:scaleX(0.6213);">.</div>
<div style="left:5px;top:507px;width:928px;height:1px;background:#e6e6e6;"></div>
<div style="left:955px;top:475px;width:6px;height:46px;background:#f6f6f6;"></div>
<div style="left:955px;top:475px;width:1px;height:46px;background:#ececec;"></div>
<svg style="left:970px;top:120px;" width="80" height="40" viewBox="0 0 80 40"><path d="M8.6 6.6 L51.6 14.7 L52 6.9 L74.1 29.4 L43.2 33.6 L46.9 27.5 C40 22 30 16 11.3 9.7 Q7.4 8.6 8.6 6.6 Z" fill="#929292"/></svg>
<div style="left:982px;top:171px;width:417px;height:201px;background:#939393;border-radius:2px;"></div>
<div style="left:987px;top:175px;width:407px;height:193px;background:#6f6f6f;"></div>
<div style="left:1072px;top:175px;width:1px;height:193px;background:#626262;"></div>
<div style="left:1074px;top:186px;width:320px;height:1px;background:#676767;"></div>
<div style="left:1074px;top:203px;width:320px;height:1px;background:#676767;"></div>
<svg style="left:1086px;top:173.5px;" width="12" height="8" viewBox="0 0 12 8"><rect x="0.5" y="0.7" width="11" height="6.8" rx="1.2" fill="#6f6f6f" stroke="#3c5566" stroke-width="1"/><path d="M1 2.2 H11" stroke="#5f6b75" stroke-width="0.9"/><path d="M0.8 0.9 H4.3" stroke="#3c5566" stroke-width="1.2"/></svg>
<div class="t" style="left:1101.50px;top:174px;font-size:9px;line-height:9px;color:#2a2a2a;transform:scaleX(0.9730);">Testclone</div>
<div class="t" style="left:1313.00px;top:174px;font-size:9px;line-height:9px;color:#2a2a2a;transform:scaleX(0.9321);">22/09/2020, 16:15:35</div>
<svg style="left:1086px;top:189px;" width="12" height="8" viewBox="0 0 12 8"><rect x="0.5" y="0.7" width="11" height="6.8" rx="1.2" fill="#6f6f6f" stroke="#3c5566" stroke-width="1"/><path d="M1 2.2 H11" stroke="#5f6b75" stroke-width="0.9"/><path d="M0.8 0.9 H4.3" stroke="#3c5566" stroke-width="1.2"/></svg>
<div class="t" style="left:1380.50px;top:191px;font-size:9px;line-height:9px;color:#2a2a2a;transform:scaleX(0.7491);">17</div>
<div style="left:982px;top:171px;width:417px;height:4px;background:#939393;"></div>
<div style="left:1394px;top:171px;width:5px;height:201px;background:#939393;"></div>
<div style="left:998px;top:191px;width:382px;height:157px;background:#fff;box-shadow:0 1px 3px rgba(0,0,0,0.35);"></div>
<div class="t" style="left:1015.60px;top:207px;font-size:16.5px;line-height:16.5px;color:#1f1f1f;transform:scaleX(1.0233);-webkit-text-stroke:0;">Create a New Folder</div>
<div style="left:1184px;top:208px;width:1px;height:13px;background:#cccccc;"></div>
<div class="t" style="left:1196.90px;top:211px;font-size:10.3px;line-height:10.3px;color:#222;transform:scaleX(0.8968);-webkit-text-stroke:0.5px #222;">ssd-011138</div>
<svg style="left:1354px;top:211px;" width="10" height="10" viewBox="0 0 10 10"><path d="M0.5 0.5 L9.5 9.5 M9.5 0.5 L0.5 9.5" stroke="#7a7a7a" stroke-width="1"/></svg>
<div class="t" style="left:1015.60px;top:251px;font-size:9.5px;line-height:9.5px;color:#666;transform:scaleX(0.9889);">Enter a name for the new folder:</div>
<div class="t" style="left:1019.40px;top:269px;font-size:9.5px;line-height:9.5px;color:#222;transform:scaleX(0.9742);">Restored VM</div>
<div style="left:1016px;top:281px;width:346px;height:1.3px;background:#4ea3e3;"></div>
<div style="left:1257px;top:308px;width:56px;height:25px;border:1px solid #6aaee3;border-radius:3px;box-sizing:border-box;background:#fff;"></div>
<div class="t" style="left:1265.40px;top:317px;font-size:8.3px;line-height:8.3px;color:#2f80c0;font-weight:bold;-webkit-text-stroke:0;transform:scaleX(0.9542);letter-spacing:0.9px;">CANCEL</div>
<div style="left:1316px;top:308px;width:48px;height:25px;background:#2f7fc2;border-radius:3px;"></div>
<div class="t" style="left:1332.70px;top:317px;font-size:8.3px;line-height:8.3px;color:#fff;font-weight:bold;-webkit-text-stroke:0;transform:scaleX(0.9588);letter-spacing:0.9px;">OK</div>
</body></html>
